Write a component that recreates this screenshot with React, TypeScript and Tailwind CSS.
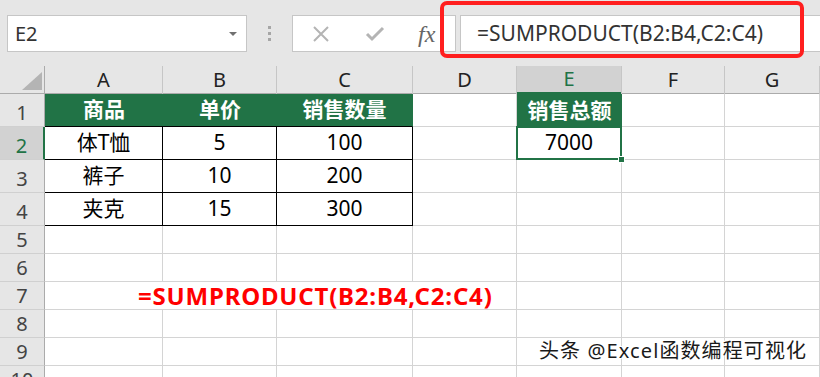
import { ReactNode } from 'react'

type CellProps = {
  children?: ReactNode
  className?: string
}

const Cell = ({ children, className = '' }: CellProps) => (
  <div
    className={`flex items-center justify-center border-r border-b border-[#d4d4d4] ${className}`}
  >
    {children}
  </div>
)

const ColHead = ({ label, active }: { label: string; active?: boolean }) => (
  <div
    className={`flex items-end justify-center pb-[2px] text-[20px] leading-none border-b border-[#ababab] ${
      active
        ? 'bg-[#d2d2d2] text-[#217346] border-b-2 border-b-[#217346]'
        : 'bg-[#e6e6e6] text-[#222]'
    }`}
  >
    <span className="mb-[1px]">{label}</span>
  </div>
)

const RowHead = ({ n, active }: { n: number; active?: boolean }) => (
  <div
    className={`flex items-end justify-center pb-[3px] text-[20px] leading-none border-b border-[#d0d0d0] ${
      active
        ? 'bg-[#d2d2d2] text-[#217346] border-r-2 border-r-[#217346]'
        : 'bg-[#e6e6e6] text-[#444] border-r border-r-[#ababab]'
    }`}
  >
    {n}
  </div>
)

const items = [
  ['体T恤', '5', '100'],
  ['裤子', '10', '200'],
  ['夹克', '15', '300']
]

export default function App() {
  return (
    <div className="relative w-[820px] h-[377px] overflow-hidden bg-white font-['Noto_Sans','Noto_Sans_CJK_SC',sans-serif]">
      {/* formula bar */}
      <div className="flex h-[66px] items-start bg-[#e6e6e6] pt-[15px] pl-[7px]">
        <div className="flex h-[37px] w-[240px] items-center justify-between border border-[#c6c6c6] bg-white pl-[7px] pr-[9px]">
          <span className="text-[20px] text-[#333]">E2</span>
          <span className="h-0 w-0 border-x-[4px] border-t-[4px] border-x-transparent border-t-[#707070]" />
        </div>
        <div className="flex h-[37px] w-[45px] flex-col items-center justify-center gap-[3px]">
          <span className="h-[3px] w-[3px] bg-[#a6a6a6]" />
          <span className="h-[3px] w-[3px] bg-[#a6a6a6]" />
          <span className="h-[3px] w-[3px] bg-[#a6a6a6]" />
        </div>
        <div className="flex h-[37px] w-[164px] items-center border border-[#c6c6c6] bg-white">
          <svg className="ml-[19px]" width="18" height="18" viewBox="0 0 18 18">
            <path d="M2 2 L16 16 M16 2 L2 16" stroke="#b4b4b4" strokeWidth="2" fill="none" />
          </svg>
          <svg className="ml-[35px]" width="20" height="18" viewBox="0 0 20 18">
            <path d="M2 9 L7 14 L18 3" stroke="#b4b4b4" strokeWidth="3" fill="none" />
          </svg>
          <span className="ml-[33px] font-['Liberation_Serif',serif] text-[24px] italic text-[#666] leading-none">fx</span>
        </div>
        <div className="ml-[4px] flex h-[37px] flex-1 items-center border border-r-0 border-[#c6c6c6] bg-white pl-[16px]">
          <span className="text-[21px] text-[#333]">=SUMPRODUCT(B2:B4,C2:C4)</span>
        </div>
      </div>

      {/* red highlight around formula */}
      <div className="absolute left-[440px] top-[1px] h-[57px] w-[364px] rounded-[7px] border-4 border-[#ff1f1f]" />

      {/* sheet */}
      <div className="grid grid-cols-[45px_118px_114px_136px_104px_105px_103px_95px] grid-rows-[28px_33px_33px_33px_33px_28px_28px_28px_28px_28px_28px] text-[21px] text-black">
        {/* header row */}
        <div className="relative border-r border-b border-[#ababab] bg-[#e6e6e6]">
          <svg className="absolute left-[22px] top-[6px]" width="20" height="18" viewBox="0 0 20 18">
            <path d="M20 0 L20 18 L0 18 Z" fill="#b4b4b4" />
          </svg>
        </div>
        {['A', 'B', 'C', 'D', 'E', 'F', 'G'].map((c) => (
          <div key={c} className="flex border-r border-[#c6c6c6] bg-[#e6e6e6]">
            <div className="flex-1 grid">
              <ColHead label={c} active={c === 'E'} />
            </div>
          </div>
        ))}

        {/* row 1 */}
        <RowHead n={1} />
        {['商品', '单价', '销售数量'].map((h, i) => (
          <div
            key={h}
            className={`flex items-center justify-center border-b border-black bg-[#217346] font-bold text-white ${
              i === 2 ? 'border-r border-r-[#217346]' : ''
            }`}
          >
            {h}
          </div>
        ))}
        <Cell />
        <div className="flex items-center justify-center bg-[#217346] font-bold text-white">
          销售总额
        </div>
        <Cell />
        <Cell />

        {/* rows 2-4 */}
        {items.map((row, r) => (
          <>
            <RowHead key={`h${r}`} n={r + 2} active={r === 0} />
            {row.map((v, i) => (
              <div
                key={`${r}-${i}`}
                className="flex items-center justify-center border-r border-b border-black"
              >
                {v}
              </div>
            ))}
            <Cell />
            {r === 0 ? (
              <div className="relative flex items-center justify-center border-r border-b border-[#d4d4d4]">
                <span>7000</span>
                <div className="absolute -left-[1px] -top-[1px] -right-[1px] -bottom-[1px] border-2 border-[#217346]" />
                <div className="absolute -right-[4px] -bottom-[4px] h-[7px] w-[7px] border border-white bg-[#217346]" />
              </div>
            ) : (
              <Cell />
            )}
            <Cell />
            <Cell />
          </>
        ))}

        {/* rows 5-10 */}
        {[5, 6, 7, 8, 9, 10].map((n) => (
          <>
            <RowHead key={`r${n}`} n={n} />
            {n === 7 ? (
              <div className="col-span-4 flex items-center border-r border-b border-[#d4d4d4] pl-[93px] font-['Noto_Sans',sans-serif] text-[24px] font-bold tracking-[0.8px] text-[#ff0000] whitespace-nowrap">
                =SUMPRODUCT(B2:B4,C2:C4)
              </div>
            ) : (
              <>
                <Cell />
                <Cell />
                <Cell />
                <Cell />
              </>
            )}
            <Cell />
            <Cell />
            <Cell />
          </>
        ))}
      </div>

      {/* watermark */}
      <div className="absolute left-[539px] top-[341px] whitespace-nowrap text-[20px] leading-none tracking-[1.1px] text-[#1a1a1a] [text-shadow:1px_1px_1px_#fff,-1px_-1px_0_#fff,1px_-1px_0_#fff,-1px_1px_0_#fff]">
        头条 @Excel函数编程可视化
      </div>
    </div>
  )
}
